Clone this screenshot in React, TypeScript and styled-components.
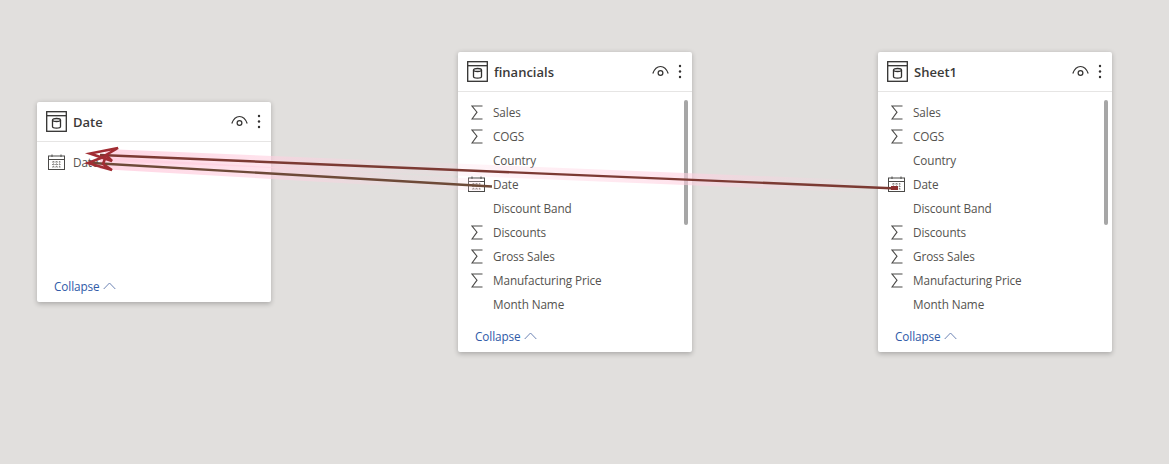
import { memo } from 'react'
import styled, { createGlobalStyle } from 'styled-components'

const GlobalStyle = createGlobalStyle`
  html, body {
    margin: 0;
    padding: 0;
    background: #e1dfdd;
  }
`

const Canvas = styled.div`
  position: relative;
  width: 1169px;
  height: 464px;
  overflow: hidden;
  background: #e1dfdd;
  font-family: 'Open Sans', 'Noto Sans', sans-serif;
`

const Card = styled.div<{ $x: number; $y: number; $h: number }>`
  position: absolute;
  left: ${({ $x }) => $x}px;
  top: ${({ $y }) => $y}px;
  display: flex;
  flex-direction: column;
  width: 234px;
  height: ${({ $h }) => $h}px;
  background: #fff;
  border-radius: 2px;
  box-shadow: 0 1.5px 5px rgba(0, 0, 0, 0.24);
`

const CardHeader = styled.div`
  display: flex;
  align-items: center;
  flex-shrink: 0;
  height: 39px;
  padding: 0 10px 0 9px;
  border-bottom: 1px solid #e6e5e4;
`

const CardTitle = styled.span`
  flex: 1;
  margin-left: 6px;
  font-size: 13px;
  font-weight: 600;
  color: #3b3a39;
`

const HeaderActions = styled.span`
  display: flex;
  align-items: center;
  gap: 9px;
  color: #323130;
`

const FieldArea = styled.div`
  position: relative;
  flex: 1;
  min-height: 0;
  padding-top: 8px;
`

const FieldRow = styled.div<{ $inset: number }>`
  display: flex;
  align-items: center;
  height: 24px;
  padding-left: ${({ $inset }) => $inset}px;
`

const FieldIcon = styled.span`
  display: flex;
  align-items: center;
  justify-content: center;
  flex-shrink: 0;
  width: 17px;
  height: 17px;
  margin-right: 8px;
  color: #4b4a48;
`

const FieldName = styled.span`
  font-size: 11.75px;
  letter-spacing: -0.1px;
  color: #55534f;
`

const ScrollThumb = styled.div`
  position: absolute;
  top: 8px;
  right: 4px;
  width: 4px;
  height: 125px;
  border-radius: 2px;
  background: #a6a6a6;
`

const CardFooter = styled.div`
  display: flex;
  align-items: center;
  flex-shrink: 0;
  gap: 3px;
  height: 31px;
  padding: 0 0 2px 17px;
  box-sizing: border-box;
  font-size: 11.75px;
  letter-spacing: -0.1px;
  color: #2f5ba8;
`

const LinkLayer = styled.svg`
  position: absolute;
  left: 0;
  top: 0;
  pointer-events: none;
`

const TableIcon = () => (
  <svg width="21" height="21" viewBox="0 0 21 21" fill="none" stroke="#323130" strokeWidth="1.3">
    <rect x="0.7" y="0.7" width="19.6" height="19.6" />
    <path d="M1 4.7h19" />
    <ellipse cx="10.5" cy="9" rx="4" ry="1.5" />
    <path d="M6.5 9v6.5c0 1 1.8 1.6 4 1.6s4-.6 4-1.6V9" />
  </svg>
)

const EyeIcon = () => (
  <svg width="17" height="13" viewBox="0 0 17 13" fill="none" stroke="currentColor" strokeWidth="1.2">
    <path d="M.8 8.5C2.5 3.8 5.3 1.5 8.5 1.5s6 2.3 7.7 7" />
    <circle cx="8.5" cy="8" r="2.4" />
  </svg>
)

const MoreIcon = () => (
  <svg width="4" height="15" viewBox="0 0 4 15" fill="currentColor">
    <circle cx="2" cy="2" r="1.2" />
    <circle cx="2" cy="7.5" r="1.2" />
    <circle cx="2" cy="13" r="1.2" />
  </svg>
)

const SigmaIcon = () => (
  <svg width="12" height="15" viewBox="0 0 12 15" fill="none" stroke="currentColor" strokeWidth="1.1">
    <path d="M11.5 1H1l5 6.2L1 14h10.5" />
  </svg>
)

const CalendarIcon = () => (
  <svg width="17" height="16" viewBox="0 0 17 16" fill="none" stroke="#4b4a48" strokeWidth="1">
    <rect x="0.5" y="2" width="16" height="13.5" />
    <path d="M0.5 5.5h16M4 0.5V3M13 0.5V3" />
    <path d="M4 8h9M4 10.5h9M4 13h9M5.5 7v7M8.5 7v7M11.5 7v7" stroke="#8a8886" strokeDasharray="1.4 1" />
  </svg>
)

const ChevronUp = () => (
  <svg width="13" height="8" viewBox="0 0 13 8" fill="none" stroke="#6d84b4" strokeWidth="1">
    <path d="M.7 7L6.5 1l5.8 6" />
  </svg>
)

type FieldKind = 'sum' | 'date' | 'none'

const tableFields: [string, FieldKind][] = [
  ['Sales', 'sum'],
  ['COGS', 'sum'],
  ['Country', 'none'],
  ['Date', 'date'],
  ['Discount Band', 'none'],
  ['Discounts', 'sum'],
  ['Gross Sales', 'sum'],
  ['Manufacturing Price', 'sum'],
  ['Month Name', 'none'],
]

const dateFields: [string, FieldKind][] = [['Date', 'date']]

type TableCardProps = {
  title: string
  x: number
  y: number
  h: number
  fields: [string, FieldKind][]
  inset?: number
  scroll?: boolean
}

const TableCard = memo(({ title, x, y, h, fields, inset = 10, scroll }: TableCardProps) => (
  <Card $x={x} $y={y} $h={h}>
    <CardHeader>
      <TableIcon />
      <CardTitle>{title}</CardTitle>
      <HeaderActions>
        <EyeIcon />
        <MoreIcon />
      </HeaderActions>
    </CardHeader>
    <FieldArea>
      {fields.map(([name, kind]) => (
        <FieldRow key={name} $inset={inset}>
          <FieldIcon>
            {kind === 'sum' && <SigmaIcon />}
            {kind === 'date' && <CalendarIcon />}
          </FieldIcon>
          <FieldName>{name}</FieldName>
        </FieldRow>
      ))}
      {scroll && <ScrollThumb />}
    </FieldArea>
    <CardFooter>
      Collapse <ChevronUp />
    </CardFooter>
  </Card>
))

TableCard.displayName = 'TableCard'

const App = () => (
  <Canvas>
    <GlobalStyle />
    <TableCard title="Date" x={37} y={102} h={200} fields={dateFields} inset={11} />
    <TableCard title="financials" x={458} y={52} h={300} fields={tableFields} scroll />
    <TableCard title="Sheet1" x={878} y={52} h={300} fields={tableFields} scroll />

    {/* relationship lines drawn over the cards */}
    <LinkLayer width="1169" height="464" viewBox="0 0 1169 464" fill="none">
      <defs>
        <linearGradient id="glow" gradientUnits="userSpaceOnUse" x1="100" y1="0" x2="880" y2="0">
          <stop offset="0" stopColor="#ffd0e0" stopOpacity="0.85" />
          <stop offset="0.22" stopColor="#ffd0e0" stopOpacity="0.6" />
          <stop offset="0.4" stopColor="#ffd0e0" stopOpacity="0.12" />
          <stop offset="0.75" stopColor="#ffd0e0" stopOpacity="0.6" />
          <stop offset="1" stopColor="#ffd0e0" stopOpacity="0" />
        </linearGradient>
      </defs>
      <path d="M105 155L880 187" stroke="url(#glow)" strokeWidth="12" />
      <path d="M100 163L480 185" stroke="url(#glow)" strokeWidth="12" />
      <path d="M100 155L897 188.5" stroke="#7c3a33" strokeWidth="2.4" />
      <path d="M92 163L492 186.5" stroke="#6e4a38" strokeWidth="2.4" />
      <path d="M118 148L90 153.5L112 161L106 155Z" stroke="#a12d33" strokeWidth="2.6" />
      <path d="M106 156L88 163L112 170L103 164Z" stroke="#a12d33" strokeWidth="2.6" />
      <rect x="891" y="186" width="7" height="4" fill="#8c2f2f" />
    </LinkLayer>
  </Canvas>
)

export default App
